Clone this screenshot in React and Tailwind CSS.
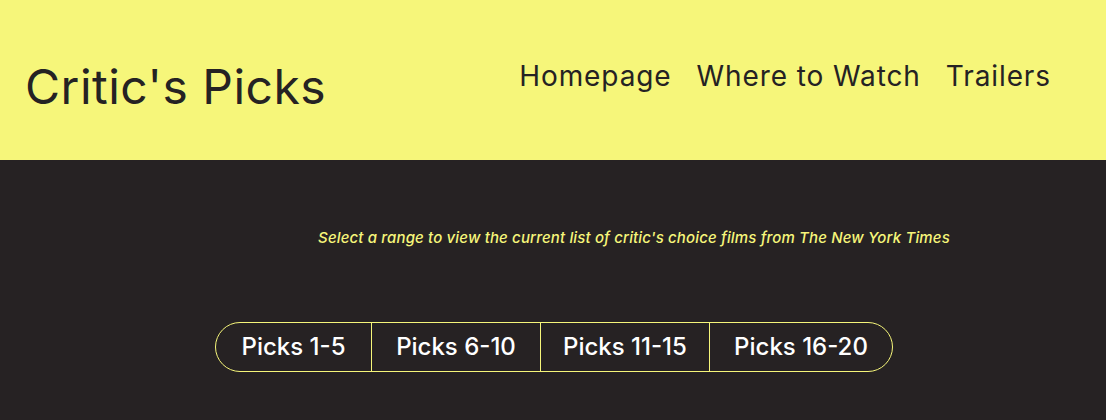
export default function App() {
  const picks = [
    { label: "Picks 1-5", w: "w-[155px]" },
    { label: "Picks 6-10", w: "w-[169px]" },
    { label: "Picks 11-15", w: "w-[169px]" },
    { label: "Picks 16-20", w: "w-[183px]" },
  ];
  return (
    <div className="w-[1106px] h-[420px] bg-[#262223] font-['Inter',sans-serif] overflow-hidden">
      <header className="h-[160px] bg-[#f6f67a] flex justify-between pl-[25px] pr-[55px] text-[#252223]">
        <h1 className="text-[48px] font-normal leading-none mt-[63px] tracking-[0.5px]">Critic's Picks</h1>
        <nav className="flex gap-[25px] text-[28px] leading-none mt-[62px] tracking-[0.9px]">
          <a>Homepage</a>
          <a>Where to Watch</a>
          <a>Trailers</a>
        </nav>
      </header>
      <main className="flex flex-col items-center">
        <p className="mt-[68px] pl-[162px] text-[15px] italic font-medium text-[#f6f67a] leading-[20px] tracking-[0.15px]">
          Select a range to view the current list of critic's choice films from The New York Times
        </p>
        <div className="mt-[74px] ml-[2px] flex h-[50px] border border-[#f6f67a] rounded-full overflow-hidden">
          {picks.map((p, i) => (
            <button
              key={p.label}
              className={`${p.w} h-full flex items-center justify-center text-white text-[24px] font-medium ${i > 0 ? "border-l border-[#f6f67a]" : ""}`}
            >
              {p.label}
            </button>
          ))}
        </div>
      </main>
    </div>
  );
}
